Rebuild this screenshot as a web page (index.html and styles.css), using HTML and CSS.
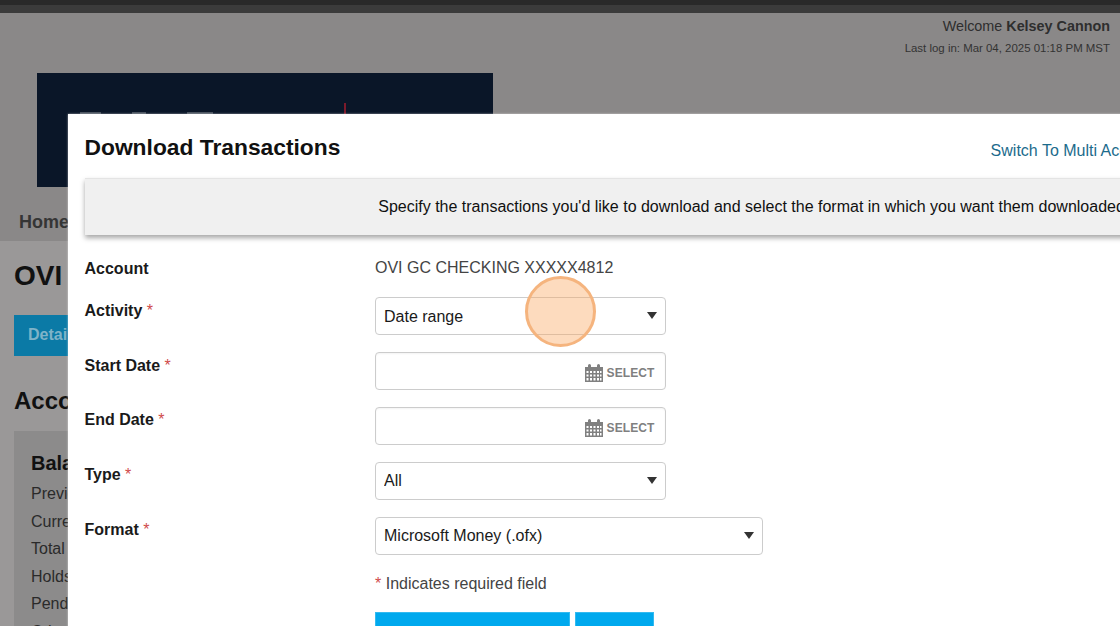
FILE: index.html
```html
<!DOCTYPE html>
<html>

<head>
    <meta charset="utf-8">
    <title>Download Transactions</title>
    <link rel="stylesheet" href="styles.css">
</head>

<body>
    <div class="page">
        <div class="top-bar"></div>

        <div class="masthead">
            <div class="welcome">Welcome <strong>Kelsey Cannon</strong></div>
            <div class="last-login">Last log in: Mar 04, 2025 01:18 PM MST</div>
            <div class="logo">
                <span class="logo-tip tip-a"></span>
                <span class="logo-tip tip-b"></span>
                <span class="logo-tip tip-c"></span>
                <span class="logo-mark"></span>
            </div>
            <div class="nav"><span class="nav-item">Home</span></div>
        </div>

        <div class="content">
            <div class="account-title">OVI GC CHECKING</div>
            <div class="tabs"><span class="tab">Details</span></div>
            <div class="section-title">Account Summary</div>
            <div class="panel">
                <div class="panel-title">Balances</div>
                <div class="panel-row">Previous Balance</div>
                <div class="panel-row">Current Balance</div>
                <div class="panel-row">Total Credits</div>
                <div class="panel-row">Holds</div>
                <div class="panel-row">Pending</div>
                <div class="panel-row">Other</div>
            </div>
        </div>

        <div class="modal">
            <div class="modal-header">
                <div class="modal-title">Download Transactions</div>
                <a class="switch-link" href="#">Switch To Multi Account Download</a>
            </div>
            <div class="intro">Specify the transactions you'd like to download and select the format in which you want them downloaded.</div>

            <div class="form">
                <div class="form-label first">Account</div>
                <div class="account-value">OVI GC CHECKING XXXXX4812</div>

                <div class="form-label">Activity <span class="req">*</span></div>
                <div class="select-wrap">
                    <select class="select">
                        <option>Date range</option>
                    </select>
                </div>

                <div class="form-label">Start Date <span class="req">*</span></div>
                <div class="date-input">
                    <svg class="cal-icon" viewBox="0 0 18 18">
                        <path fill="#808080" fill-rule="evenodd" d="M0 3h3V1.500a1.500 1.500 0 0 1 3 0V3h6V1.500a1.500 1.500 0 0 1 3 0V3h3v15H0zM1.500 7v2h2V7zm3.500 0v2h2V7zm3.500 0v2h2V7zm3.500 0v2h2V7zm3 0v2h1.500V7zM1.500 10.500v2h2v-2zm3.500 0v2h2v-2zm3.500 0v2h2v-2zm3.500 0v2h2v-2zm3 0v2h1.500v-2zM1.500 14v2.500h2V14zM5 14v2.500h2V14zm3.500 0v2.500h2V14zm3.500 0v2.500h2V14zm3 0v2.500h1.500V14z" />
                    </svg>
                    <span class="select-text">SELECT</span>
                </div>

                <div class="form-label">End Date <span class="req">*</span></div>
                <div class="date-input">
                    <svg class="cal-icon" viewBox="0 0 18 18">
                        <path fill="#808080" fill-rule="evenodd" d="M0 3h3V1.500a1.500 1.500 0 0 1 3 0V3h6V1.500a1.500 1.500 0 0 1 3 0V3h3v15H0zM1.500 7v2h2V7zm3.500 0v2h2V7zm3.500 0v2h2V7zm3.500 0v2h2V7zm3 0v2h1.500V7zM1.500 10.500v2h2v-2zm3.500 0v2h2v-2zm3.500 0v2h2v-2zm3.500 0v2h2v-2zm3 0v2h1.500v-2zM1.500 14v2.500h2V14zM5 14v2.500h2V14zm3.500 0v2.500h2V14zm3.500 0v2.500h2V14zm3 0v2.500h1.500V14z" />
                    </svg>
                    <span class="select-text">SELECT</span>
                </div>

                <div class="form-label">Type <span class="req">*</span></div>
                <div class="select-wrap">
                    <select class="select">
                        <option>All</option>
                    </select>
                </div>

                <div class="form-label">Format <span class="req">*</span></div>
                <div class="select-wrap wide">
                    <select class="select">
                        <option>Microsoft Money (.ofx)</option>
                    </select>
                </div>

                <div></div>
                <div class="required-note"><span class="req">*</span> Indicates required field</div>

                <div></div>
                <div class="buttons">
                    <button class="button download">Download</button>
                    <button class="button cancel">Cancel</button>
                </div>
            </div>
        </div>

        <div class="click-marker"></div>
    </div>
</body>

</html>
```

FILE: styles.css
```css
body {
    margin: 0;
    font-family: "Liberation Sans", Arial, sans-serif;
    color: #222;
}

.page {
    position: relative;
    height: 626px;
    overflow: hidden;
    background: #9a9898;
}

.top-bar {
    height: 5px;
    background: #292929;
    border-bottom: 8px solid #3b3b3b;
}

.masthead {
    height: 228px;
    background: #8a8888;
    padding: 0 10px 0 0;
    box-sizing: border-box;
    text-align: right;
    display: flex;
    flex-direction: column;
    color: #2e2e2e;
}

.welcome {
    font-size: 14.37px;
    line-height: 17px;
    padding-top: 5px;
}

.last-login {
    font-size: 11.45px;
    line-height: 14px;
    margin-top: 6px;
    color: #333;
}

.logo {
    position: relative;
    width: 456px;
    height: 114px;
    margin: 18px 0 0 37px;
    background: #0a1628;
}

.logo-mark {
    position: absolute;
    left: 307px;
    top: 30px;
    width: 2px;
    height: 12px;
    background: #7c1a2b;
}

.logo-tip {
    position: absolute;
    top: 39px;
    height: 2px;
    background: #454f5b;
}

.tip-a {
    left: 43px;
    width: 21px;
}

.tip-b {
    left: 95px;
    width: 14px;
}

.tip-c {
    left: 150px;
    width: 26px;
}

.nav {
    text-align: left;
    padding: 25px 0 0 19px;
    font-size: 18px;
    font-weight: bold;
    line-height: 21px;
    color: #353535;
}

.content {
    padding: 19px 14px 0;
}

.account-title {
    font-size: 28px;
    font-weight: bold;
    line-height: 32px;
    color: #111;
}

.tabs {
    margin-top: 23px;
    display: flex;
}

.tab {
    width: 140px;
    height: 41px;
    padding-left: 14px;
    box-sizing: border-box;
    background: #0b7aa6;
    color: #7fb3c8;
    font-size: 16px;
    font-weight: bold;
    line-height: 39px;
}

.section-title {
    margin-top: 31px;
    font-size: 24px;
    font-weight: bold;
    line-height: 28px;
    color: #111;
}

.panel {
    margin-top: 16px;
    width: 600px;
    padding: 20px 17px;
    background: #8c8b8b;
}

.panel-title {
    font-size: 20px;
    font-weight: bold;
    line-height: 24px;
    color: #111;
    margin-bottom: 5px;
}

.panel-row {
    font-size: 16px;
    line-height: 27.5px;
    color: #2a2a2a;
}

.modal {
    position: absolute;
    left: 68px;
    top: 114px;
    width: 1366px;
    height: 600px;
    background: white;
    box-shadow: 0 0 2px rgba(255, 255, 255, 0.6);
}

.modal-header {
    width: 1183px;
    height: 64px;
    box-sizing: border-box;
    padding: 0 17px 0 16.5px;
    display: flex;
    justify-content: space-between;
    align-items: flex-start;
}

.modal-title {
    margin-top: 19px;
    font-size: 22.8px;
    font-weight: bold;
    line-height: 28px;
    color: #111;
}

.switch-link {
    margin-top: 28px;
    font-size: 16px;
    line-height: 18px;
    white-space: nowrap;
    color: #1c6b8c;
    text-decoration: none;
}

.intro {
    margin: 0 17px 0 16.5px;
    height: 57px;
    padding-left: 6px;
    box-sizing: border-box;
    border-top: 1px solid #e4e4e4;
    background: #f0f0f0;
    box-shadow: 0 3px 5px rgba(0, 0, 0, 0.35);
    text-align: center;
    font-size: 16px;
    line-height: 56px;
    color: #111;
}

.form {
    display: grid;
    grid-template-columns: 290.5px 1fr;
    row-gap: 16.85px;
    padding: 24px 17px 0 16.5px;
}

.form-label {
    padding-top: 3.5px;
    font-size: 16px;
    font-weight: bold;
    line-height: 19px;
    color: #1a1a1a;
}

.form-label.first {
    padding-top: 0;
}

.req {
    color: #d04a4a;
    font-weight: normal;
}

.account-value {
    font-size: 16px;
    line-height: 19px;
    margin-top: -1px;
    color: #444;
    height: 22.45px;
}

.select-wrap {
    position: relative;
    width: 290.5px;
    height: 38px;
}

.select-wrap.wide {
    width: 387.5px;
}

.select-wrap::after {
    content: "";
    position: absolute;
    right: 9px;
    top: 15px;
    border-left: 5px solid transparent;
    border-right: 5px solid transparent;
    border-top: 7px solid #333;
}

.select {
    appearance: none;
    width: 100%;
    height: 100%;
    padding: 0 8px;
    border: 1px solid #ccc;
    border-radius: 4px;
    background: white;
    font-family: inherit;
    font-size: 16px;
    color: #1a1a1a;
}

.date-input {
    width: 290.5px;
    height: 38px;
    box-sizing: border-box;
    border: 1px solid #ccc;
    border-radius: 4px;
    box-shadow: inset 0 1px 2px rgba(0, 0, 0, 0.05);
    display: flex;
    align-items: center;
    justify-content: flex-end;
    gap: 4px;
    padding: 4px 10px 0 0;
}

.cal-icon {
    width: 18px;
    height: 18px;
}

.select-text {
    font-size: 12px;
    font-weight: bold;
    letter-spacing: 0.1px;
    color: #808080;
}

.required-note {
    font-size: 16px;
    line-height: 19px;
    margin-top: 2px;
    color: #444;
}

.buttons {
    display: flex;
    gap: 5px;
    margin-top: 3px;
}

.button {
    height: 56px;
    padding: 0;
    border: 1px solid #33baf0;
    background: #00a9ee;
    color: white;
    font-family: inherit;
    font-size: 16px;
    font-weight: bold;
}

.button.download {
    width: 195px;
}

.button.cancel {
    width: 79px;
}

.click-marker {
    position: absolute;
    left: 525px;
    top: 276px;
    width: 71px;
    height: 71px;
    box-sizing: border-box;
    border: 3px solid #f5b47e;
    border-radius: 50%;
    background: rgba(251, 169, 100, 0.42);
}
```
